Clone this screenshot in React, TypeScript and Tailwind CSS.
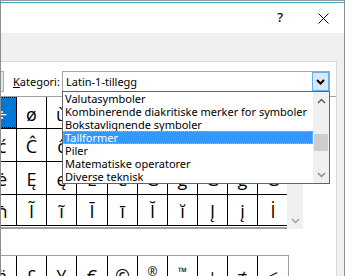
import React from "react";

const colW = [29, 30, 30, 31, 30, 30, 30, 30, 30, 30];

const gridRows: { h: number; chars: string[] }[] = [
  { h: 32, chars: ["÷", "ø", "ù", "ú", "û", "ü", "ý", "þ", "ÿ", "Ā"] },
  { h: 33, chars: ["ć", "Ĉ", "ĉ", "Ċ", "ċ", "Č", "č", "Ď", "ď", "Đ"] },
  { h: 33, chars: ["ė", "Ę", "ę", "Ě", "ě", "Ĝ", "ĝ", "Ğ", "ğ", "Ġ"] },
  { h: 31, chars: ["ħ", "Ĩ", "ĩ", "Ī", "ī", "Ĭ", "ĭ", "Į", "į", "İ"] },
];

const recent = ["ä", "£", "¥", "€", "©", "®", "™", "±", "≠", "≤"];

const categories = [
  "Valutasymboler",
  "Kombinerende diakritiske merker for symboler",
  "Bokstavlignende symboler",
  "Tallformer",
  "Piler",
  "Matematiske operatorer",
  "Diverse teknisk",
];

function Chevron({ up, color, bold }: { up?: boolean; color: string; bold?: boolean }) {
  return (
    <svg width="9" height="6" viewBox="0 0 9 6">
      <polyline
        points={up ? "1,5 4.5,1.5 8,5" : "1,1 4.5,4.5 8,1"}
        fill="none"
        stroke={color}
        strokeWidth={bold ? 2 : 1.5}
      />
    </svg>
  );
}

function Cell({ ch, w, last, selected, pad }: { ch: string; w: number; last?: boolean; selected?: boolean; pad: string }) {
  return (
    <div
      style={{ width: w }}
      className={`shrink-0 flex items-center justify-center ${pad} ${last ? "" : "border-r border-black"} ${
        selected ? "bg-[#0078d7] text-white outline-1 outline-dotted outline-black -outline-offset-1" : ""
      }`}
    >
      {ch}
    </div>
  );
}

export default function App() {
  return (
    <div className="w-[345px] h-[276px] overflow-hidden bg-[#f0f0f0] border-x border-[#8c8c8c] flex flex-col font-['Noto_Sans',sans-serif] text-[11px] text-black">
      <div className="h-px shrink-0 bg-[#9a9a9a]" />
      <div className="h-px shrink-0 bg-white" />
      <div className="h-px shrink-0 bg-[#3aa6c6]" />

      {/* title bar */}
      <div className="h-[30px] shrink-0 bg-white flex items-center justify-end pr-[15px]">
        <span className="text-[13px] font-medium leading-none mr-[35px] pb-px">?</span>
        <svg width="11" height="11" viewBox="0 0 11 11">
          <line x1="0.5" y1="0.5" x2="10.5" y2="10.5" stroke="#000" strokeWidth="1" />
          <line x1="10.5" y1="0.5" x2="0.5" y2="10.5" stroke="#000" strokeWidth="1" />
        </svg>
      </div>

      {/* body */}
      <div className="flex-1 pt-[28px] pr-[7px] flex flex-col min-h-0">
        <div className="flex-1 bg-white border-t border-r border-[#d9d9d9] flex flex-col">
          {/* category row */}
          <div className="mt-[9px] h-[21px] flex items-center relative z-10">
            <div className="w-[3px] h-[21px] border-y border-r border-[#adadad] bg-[#e5e5e5]" />
            <div className="ml-[9px] w-[49px] pt-px">
              <span className="underline">K</span>ategori:
            </div>
            <div className="relative w-[268px] h-[21px] border border-[#a6a6a6] flex items-stretch">
              <div className="flex-1 pl-[3px] pt-px flex items-center">Latin-1-tillegg</div>
              <div className="w-[17px] bg-[#d5e7f9] border border-[#6aaeeb] flex items-center justify-center">
                <Chevron color="#000" bold />
              </div>

              {/* open list */}
              <div className="absolute left-[-1px] top-full w-[268px] border border-[#646464] bg-white flex">
                <div className="flex-1 flex flex-col">
                  {categories.map((c) => (
                    <div
                      key={c}
                      className={`h-[13px] leading-[14px] pl-[2px] whitespace-nowrap ${
                        c === "Tallformer"
                          ? "bg-[#3399ff] text-white outline-1 outline-dotted outline-[#e9a35a] -outline-offset-1"
                          : ""
                      }`}
                    >
                      {c}
                    </div>
                  ))}
                </div>
                <div className="w-[16px] bg-[#f0f0f0] flex flex-col">
                  <div className="h-[17px] flex items-center justify-center">
                    <Chevron up color="#606060" />
                  </div>
                  <div className="mt-[25px] mx-px h-[17px] bg-[#cdcdcd]" />
                  <div className="flex-1" />
                  <div className="h-[17px] flex items-center justify-center">
                    <Chevron color="#888888" />
                  </div>
                </div>
              </div>
            </div>
          </div>

          {/* symbol grid */}
          <div className="mt-[4px] flex border-t border-[#a0a0a0] font-['Open_Sans',sans-serif] text-[18px]">
            <div className="w-[286px] flex flex-col border-b-2 border-[#a0a0a0] overflow-hidden">
              {gridRows.map((r, ri) => (
                <div
                  key={ri}
                  style={{ height: r.h }}
                  className="flex -ml-[13px] border-b border-black"
                >
                  {r.chars.map((ch, ci) => (
                    <Cell
                      key={ci}
                      ch={ch}
                      w={colW[ci]}
                      last={ci === 9}
                      pad="pt-[3px]"
                      selected={ri === 0 && ci === 0}
                    />
                  ))}
                </div>
              ))}
              <div className="h-px" />
            </div>
            <div className="w-[16px] bg-[#f0f0f0] flex flex-col justify-end">
              <div className="h-[17px] flex items-center justify-center">
                <Chevron color="#a0a0a0" />
              </div>
            </div>
          </div>

          {/* recently used */}
          <div className="mt-[26px] w-[288px] border-t border-r border-[#a0a0a0] overflow-hidden font-['Open_Sans',sans-serif] text-[18px]">
            <div className="flex -ml-[13px] h-[33px]">
              {recent.map((ch, ci) =>
                ch === "®" || ch === "™" ? (
                  <div
                    key={ci}
                    style={{ width: colW[ci] }}
                    className="shrink-0 flex justify-center pt-[10px] text-[12px] leading-none border-r border-black"
                  >
                    {ch}
                  </div>
                ) : (
                  <Cell key={ci} ch={ch} w={colW[ci]} last={ci === 9} pad="pt-[7px]" />
                )
              )}
            </div>
          </div>
        </div>
      </div>
    </div>
  );
}
